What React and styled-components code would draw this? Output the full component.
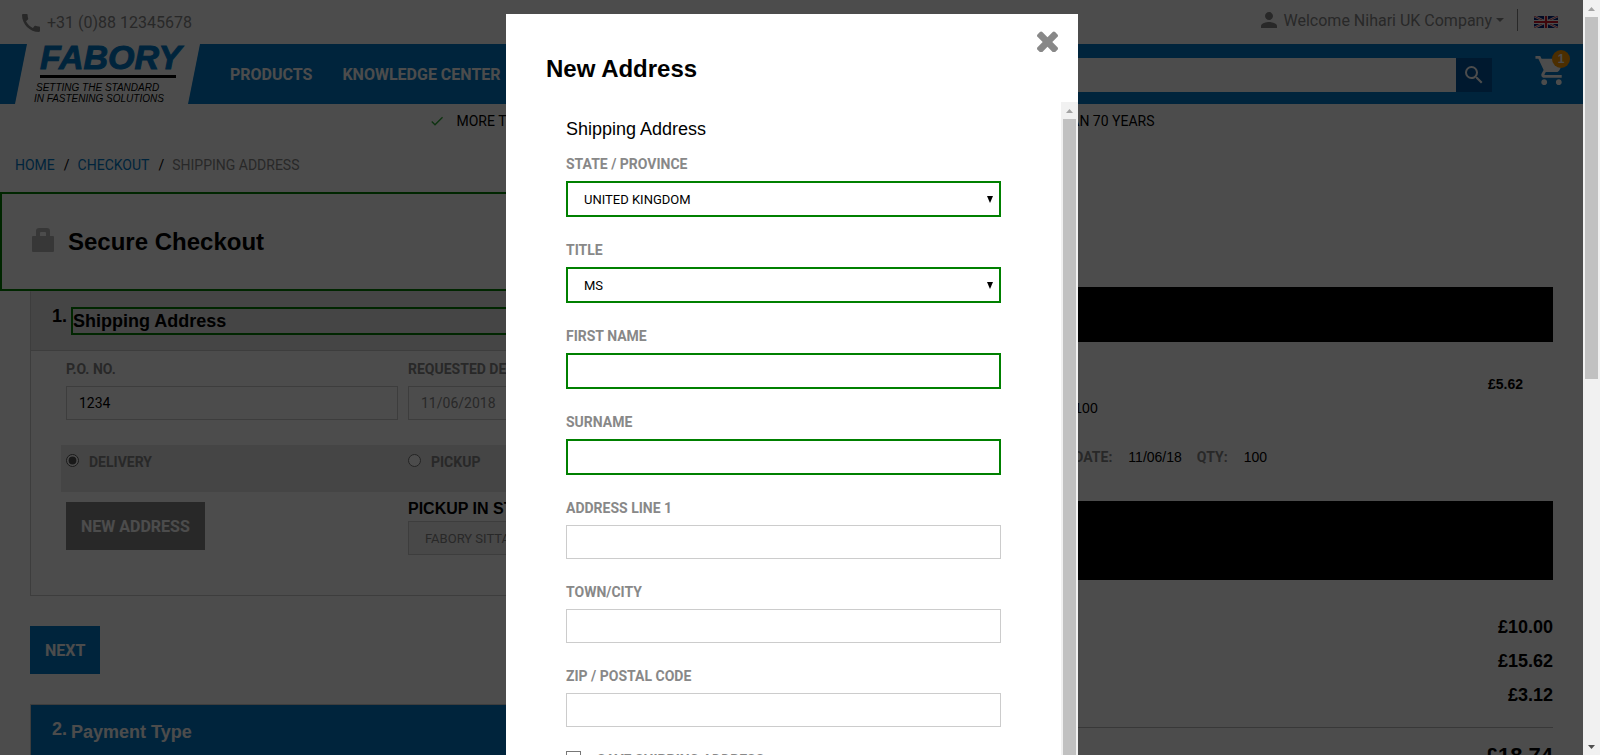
import React from "react";
import styled, { createGlobalStyle } from "styled-components";
import { MdCall, MdPerson, MdSearch, MdShoppingCart, MdCheck } from "react-icons/md";

const blue = "#007ac9";
const grey = "#888";
const line = "#ccc";
const pale = "#e6e6e6";
const arial = '"Liberation Sans", Arial, sans-serif';
const roboto = 'Roboto, "Liberation Sans", sans-serif';

const GlobalStyle = createGlobalStyle`
  *, *::before, *::after { box-sizing: border-box; }
  body { margin: 0; background: #fff; color: #000; font: 14px/20px ${roboto}; overflow: hidden; }
  h1, h2, h3, p, ul, ol, dl, dd, dt { margin: 0; padding: 0; list-style: none; }
  a { text-decoration: none; }
  button, input, select { font-family: inherit; border-radius: 0; }
  button { border: 0; padding: 0; cursor: pointer; }
`;

const Shell = styled.div`
  display: flex;
  height: 100vh;
`;

const Viewport = styled.div`
  position: relative;
  flex: 1;
  min-width: 0;
  overflow: hidden;
`;

/* Scrollbar */
const Track = styled.div`
  display: flex;
  flex-direction: column;
  align-items: center;
  flex: none;
  width: 17px;
  background: #f1f1f1;
`;
const Thumb = styled.div`
  width: 13px;
  flex: 0 0 ${(p) => p.$size};
  background: #c1c1c1;
`;
const ArrowBox = styled.svg`
  flex: none;
  width: 17px;
  height: 17px;
  fill: ${(p) => p.$tone};
`;
const Spacer = styled.div`
  flex: 1;
`;

function Scrollbar({ size, open }) {
  return (
    <Track aria-hidden="true">
      <ArrowBox $tone="#a3a3a3" viewBox="0 0 17 17"><path d="M5 11h7L8.500 7z" /></ArrowBox>
      <Thumb $size={size} />
      {open && (
        <>
          <Spacer />
          <ArrowBox $tone="#505050" viewBox="0 0 17 17"><path d="M5 7h7l-3.500 4z" /></ArrowBox>
        </>
      )}
    </Track>
  );
}

/* Site header */
const TopBar = styled.div`
  display: flex;
  justify-content: space-between;
  align-items: center;
  height: 44px;
  padding: 0 25px 4px 19px;
  color: ${grey};
  font-size: 16px;
`;
const Phone = styled.a`
  display: flex;
  align-items: center;
  gap: 4px;
  padding-top: 5px;
  color: inherit;
`;
const Account = styled.div`
  display: flex;
  align-items: center;
`;
const AccountButton = styled.button`
  display: flex;
  align-items: center;
  gap: 3px;
  background: none;
  color: inherit;
  font-size: 16px;
`;
const Caret = styled.span`
  margin-left: 1px;
  border: 4px solid transparent;
  border-top-color: currentColor;
  border-bottom: 0;
`;
const Divider = styled.span`
  width: 1px;
  height: 22px;
  margin: 0 16px 0 13px;
  background: ${grey};
`;
const Flag = styled.svg`
  display: block;
  width: 24px;
  height: 12px;
  margin-top: 4px;
`;

const Header = styled.header`
  display: flex;
  align-items: center;
  height: 60px;
  padding: 0 14px 0 15px;
  background: ${blue};
`;
const Logo = styled.svg`
  display: block;
  flex: none;
  width: 185px;
  height: 60px;
`;
const Nav = styled.nav`
  display: flex;
  flex: none;
  gap: 30px;
  margin: 2px 0 0 30px;
`;
const NavLink = styled.a`
  color: #fff;
  font-size: 16px;
  font-weight: 700;
`;
const Search = styled.form`
  display: flex;
  flex: 1;
  height: 34px;
  margin: 2px 42px 0 30px;
`;
const SearchInput = styled.input`
  flex: 1;
  min-width: 0;
  border: 0;
  padding: 0 12px;
  background: #fff;
`;
const SearchButton = styled.button`
  display: grid;
  place-items: center;
  width: 36px;
  background: #00569f;
  color: #fff;
`;
const Cart = styled.a`
  position: relative;
  display: block;
  height: 35px;
  margin-bottom: 7px;
  color: #fff;
`;
const Badge = styled.span`
  position: absolute;
  top: -3px;
  right: -1px;
  width: 18px;
  height: 18px;
  border-radius: 50%;
  background: #f90;
  color: #fff;
  font: 700 12px/18px ${arial};
  text-align: center;
`;

const Usps = styled.ul`
  display: flex;
  justify-content: space-between;
  width: 726px;
  margin: 0 auto;
  padding-top: 7px;
`;
const Usp = styled.li`
  display: flex;
  align-items: center;
  gap: 12px;
  svg { color: #2fa836; }
`;
const Crumbs = styled.ol`
  display: flex;
  padding: 24px 15px 17px;
`;
const Crumb = styled.li`
  color: ${grey};
  a { color: ${blue}; }
  & + &::before { content: "/"; margin: 0 8px 0 9px; color: #000; }
`;

/* Checkout */
const Columns = styled.main`
  display: grid;
  grid-template-columns: 2fr 1fr;
`;
const Secure = styled.div`
  display: flex;
  align-items: center;
  gap: 14px;
  height: 99px;
  padding-left: 30px;
  border: 2px solid green;
`;
const Lock = styled.svg`
  width: 22px;
  height: 24px;
  margin-bottom: 4px;
  fill: #b9b9b9;
`;
const PageTitle = styled.h1`
  font: 700 24px/28px ${arial};
`;
const Steps = styled.div`
  padding: 0 15px 0 30px;
`;
const Step = styled.section`
  border: 1px solid ${line};
  border-top-color: ${(p) => (p.$active ? pale : line)};
`;
const StepHead = styled.header`
  display: flex;
  gap: 4px;
  padding: 15px 20px 15px 21px;
  background: ${(p) => (p.$active ? pale : blue)};
  border-bottom: 1px solid ${line};
  color: ${(p) => (p.$active ? "#000" : "#fff")};
  font: 700 18px/18px ${arial};
`;
const StepTitle = styled.h2`
  flex: 1;
  border: ${(p) => (p.$active ? "2px solid green" : "0")};
  font: inherit;
  line-height: 24px;
`;
const StepBody = styled.div`
  padding: 8px 30px 40px;
`;
const FormRow = styled.div`
  display: grid;
  grid-template-columns: 332px 332px 1fr;
  gap: 10px;
  padding: 0 5px;
`;
const ChoiceRow = styled(FormRow)`
  height: 47px;
  margin: 25px 0 10px;
  background: ${pale};
`;
const Label = styled.label`
  display: block;
  color: ${grey};
  font: 700 14px/20px ${roboto};
`;
const TextInput = styled.input`
  display: block;
  width: 100%;
  height: 34px;
  margin-top: 7px;
  padding: 0 12px;
  border: 1px solid ${line};
  background: #fff;
  color: ${(p) => (p.$muted ? grey : "#000")};
  font-size: 14px;
`;
const Choice = styled.label`
  display: flex;
  align-items: flex-start;
  gap: 10px;
  padding-top: 7px;
  color: ${grey};
  font-weight: 700;
  input { width: 13px; height: 13px; margin: 2px 0 0; accent-color: #555; }
`;
const Button = styled.button`
  justify-self: start;
  height: 48px;
  padding: 2px 15px 0;
  background: ${(p) => (p.$muted ? grey : blue)};
  color: #fff;
  font: 700 16px/20px ${roboto};
`;
const PickupTitle = styled.h3`
  font: 700 16px/14px ${arial};
`;
const StoreSelect = styled.select`
  display: block;
  width: 100%;
  height: 34px;
  margin-top: 5px;
  padding: 0 16px;
  border: 1px solid ${line};
  background: #f0f0f0;
  color: ${grey};
  font-size: 13px;
  appearance: none;
`;
const StepAction = styled.div`
  display: flex;
  padding: 30px 0;
`;

/* Order summary */
const Summary = styled.aside`
  padding: 95px 30px 0 0;
  font-family: ${arial};
`;
const Band = styled.div`
  height: ${(p) => p.$height};
  background: #000;
`;
const Item = styled.div`
  display: flex;
  flex-direction: column;
  gap: 4px;
  padding: 32px 30px 34px 19px;
`;
const ItemPrice = styled.strong`
  align-self: flex-end;
`;
const ItemMeta = styled.dl`
  display: flex;
  margin-top: 25px;
  dt { color: ${grey}; font-weight: 700; font-family: ${roboto}; margin-right: 16px; }
  dd { margin-right: 15px; }
`;
const Totals = styled.div`
  display: flex;
  flex-direction: column;
  align-items: flex-end;
  gap: 14px;
  padding: 37px 0 22px;
  border-bottom: 1px solid #bbb;
  font: 700 18px/20px ${arial};
`;
const GrandTotal = styled.p`
  padding-top: 15px;
  font: 700 22px/26px ${arial};
  text-align: right;
`;

/* Dialog */
const Overlay = styled.div`
  position: absolute;
  inset: 0;
  display: flex;
  justify-content: center;
  padding: 14px 0 0 1px;
  background: rgba(0, 0, 0, 0.7);
`;
const Dialog = styled.section`
  display: flex;
  flex-direction: column;
  width: 572px;
  background: #fff;
`;
const DialogHead = styled.header`
  display: flex;
  justify-content: space-between;
  align-items: flex-start;
  height: 88px;
  padding: 17px 20px 0 40px;
`;
const DialogTitle = styled.h2`
  padding-top: 24px;
  font: 700 24px/28px ${arial};
`;
const Close = styled.button`
  background: none;
  svg { display: block; width: 21px; height: 21px; fill: ${grey}; }
`;
const DialogBody = styled.div`
  display: flex;
  flex: 1;
  min-height: 0;
`;
const AddressForm = styled.form`
  flex: 1;
  padding: 16px 60px 0;
  overflow: hidden;
`;
const FormTitle = styled.h3`
  margin-bottom: 14px;
  font: 400 18px/22px ${arial};
`;
const Field = styled.div`
  margin-bottom: 23px;
`;
const FieldInput = styled(TextInput)`
  height: ${(p) => (p.$required ? "36px" : "34px")};
  border: ${(p) => (p.$required ? "2px solid green" : `1px solid ${line}`)};
`;
const SelectWrap = styled.div`
  display: grid;
  align-items: center;
  margin-top: 7px;
  > * { grid-area: 1 / 1; }
`;
const FieldSelect = styled.select`
  width: 100%;
  height: 36px;
  padding: 0 16px;
  border: 2px solid green;
  background: #fff;
  color: #000;
  font-size: 13px;
  appearance: none;
`;
const SelectArrow = styled.svg`
  justify-self: end;
  width: 6px;
  height: 7px;
  margin-right: 8px;
  pointer-events: none;
`;
const Tick = styled.label`
  display: flex;
  gap: 16px;
  color: ${grey};
  font-weight: 700;
  input {
    width: 15px;
    height: 15px;
    margin: 1px 0 0;
    border: 1px solid #777;
    background: #fff;
    appearance: none;
  }
`;

const fields = [
  { id: "country", label: "STATE / PROVINCE", option: "UNITED KINGDOM" },
  { id: "title", label: "TITLE", option: "MS" },
  { id: "first", label: "FIRST NAME", required: true },
  { id: "surname", label: "SURNAME", required: true },
  { id: "address1", label: "ADDRESS LINE 1" },
  { id: "town", label: "TOWN/CITY" },
  { id: "zip", label: "ZIP / POSTAL CODE" },
];

function AddressField({ id, label, option, required }) {
  return (
    <Field>
      <Label htmlFor={id}>{label}</Label>
      {option ? (
        <SelectWrap>
          <FieldSelect id={id}><option>{option}</option></FieldSelect>
          <SelectArrow viewBox="0 0 6 7"><path d="M0 0h6L3 7z" /></SelectArrow>
        </SelectWrap>
      ) : (
        <FieldInput id={id} type="text" $required={required} />
      )}
    </Field>
  );
}

function SiteHeader() {
  return (
    <>
      <TopBar>
        <Phone href="tel:+318812345678"><MdCall size={24} />+31 (0)88 12345678</Phone>
        <Account>
          <AccountButton type="button">
            <MdPerson size={24} />Welcome Nihari UK Company<Caret />
          </AccountButton>
          <Divider />
          <Flag viewBox="0 0 24 12">
            <path fill="#00247d" d="M0 0h24v12H0z" />
            <path stroke="#fff" strokeWidth="2.400" d="M0 0l24 12M24 0L0 12" />
            <path stroke="#cf142b" strokeWidth="0.800" d="M0 0l24 12M24 0L0 12" />
            <path stroke="#fff" strokeWidth="4" d="M12 0v12M0 6h24" />
            <path stroke="#cf142b" strokeWidth="2.200" d="M12 0v12M0 6h24" />
          </Flag>
        </Account>
      </TopBar>
      <Header>
        <Logo viewBox="0 0 185 60" role="img" aria-label="Fabory">
          <path fill="#fff" d="M12 0h173l-12 60H0z" />
          <text x="25" y="25" fill={blue} stroke={blue} fontFamily="Liberation Sans" fontSize="34" fontWeight="700" fontStyle="italic">FABORY</text>
          <path d="M25 31h136v3H25z" />
          <text x="21" y="47" fontFamily="Liberation Sans" fontSize="10" fontStyle="italic">SETTING THE STANDARD</text>
          <text x="19" y="58" fontFamily="Liberation Sans" fontSize="10" fontStyle="italic">IN FASTENING SOLUTIONS</text>
        </Logo>
        <Nav>
          <NavLink href="#products">PRODUCTS</NavLink>
          <NavLink href="#knowledge">KNOWLEDGE CENTER</NavLink>
        </Nav>
        <Search>
          <SearchInput type="search" aria-label="Search" />
          <SearchButton type="button" aria-label="Search"><MdSearch size={24} /></SearchButton>
        </Search>
        <Cart href="#cart" aria-label="Cart"><MdShoppingCart size={35} /><Badge>1</Badge></Cart>
      </Header>
      <Usps>
        <Usp><MdCheck size={16} />MORE THAN</Usp>
        <Usp>MORE THAN 70 YEARS</Usp>
      </Usps>
      <Crumbs>
        <Crumb><a href="#home">HOME</a></Crumb>
        <Crumb><a href="#checkout">CHECKOUT</a></Crumb>
        <Crumb>SHIPPING ADDRESS</Crumb>
      </Crumbs>
    </>
  );
}

function CheckoutSteps() {
  return (
    <div>
      <Secure>
        <Lock viewBox="0 0 22 24">
          <path fillRule="evenodd" d="M1 8h3V3q0-3 3-3h8q3 0 3 3v5h3q1 0 1 1v14q0 1-1 1H1q-1 0-1-1V9q0-1 1-1zM8 8h6V5q0-1-1-1H9Q8 4 8 5z" />
        </Lock>
        <PageTitle>Secure Checkout</PageTitle>
      </Secure>
      <Steps>
        <Step $active>
          <StepHead $active><span>1.</span><StepTitle $active>Shipping Address</StepTitle></StepHead>
          <StepBody>
            <FormRow>
              <div>
                <Label htmlFor="po">P.O. NO.</Label>
                <TextInput id="po" defaultValue="1234" />
              </div>
              <div>
                <Label htmlFor="date">REQUESTED DELIVERY</Label>
                <TextInput id="date" $muted defaultValue="11/06/2018" />
              </div>
            </FormRow>
            <ChoiceRow>
              <Choice><input type="radio" name="method" defaultChecked />DELIVERY</Choice>
              <Choice><input type="radio" name="method" />PICKUP</Choice>
            </ChoiceRow>
            <FormRow>
              <Button type="button" $muted>NEW ADDRESS</Button>
              <div>
                <PickupTitle>PICKUP IN STORE</PickupTitle>
                <StoreSelect aria-label="Pickup in store"><option>FABORY SITTARD</option></StoreSelect>
              </div>
            </FormRow>
          </StepBody>
        </Step>
        <StepAction><Button type="button">NEXT</Button></StepAction>
        <Step>
          <StepHead><span>2.</span><StepTitle>Payment Type</StepTitle></StepHead>
        </Step>
      </Steps>
    </div>
  );
}

function OrderSummary() {
  return (
    <Summary>
      <Band $height="55px" />
      <Item>
        <ItemPrice>£5.62</ItemPrice>
        <p>100</p>
        <ItemMeta>
          <dt>DATE:</dt><dd>11/06/18</dd>
          <dt>QTY:</dt><dd>100</dd>
        </ItemMeta>
      </Item>
      <Band $height="79px" />
      <Totals><span>£10.00</span><span>£15.62</span><span>£3.12</span></Totals>
      <GrandTotal>£18.74</GrandTotal>
    </Summary>
  );
}

function AddressDialog() {
  return (
    <Overlay>
      <Dialog role="dialog" aria-labelledby="dialog-title">
        <DialogHead>
          <DialogTitle id="dialog-title">New Address</DialogTitle>
          <Close type="button" aria-label="Close">
            <svg viewBox="302 334 1188 1188">
              <path d="M1490 1322q0 40-28 68l-136 136q-28 28-68 28t-68-28l-294-294-294 294q-28 28-68 28t-68-28l-136-136q-28-28-28-68t28-68l294-294-294-294q-28-28-28-68t28-68l136-136q28-28 68-28t68 28l294 294 294-294q28-28 68-28t68 28l136 136q28 28 28 68t-28 68l-294 294 294 294q28 28 28 68z" />
            </svg>
          </Close>
        </DialogHead>
        <DialogBody>
          <AddressForm>
            <FormTitle>Shipping Address</FormTitle>
            {fields.map((f) => <AddressField key={f.id} {...f} />)}
            <Tick><input type="checkbox" />SAVE SHIPPING ADDRESS</Tick>
          </AddressForm>
          <Scrollbar size="calc(100% - 17px)" />
        </DialogBody>
      </Dialog>
    </Overlay>
  );
}

export default function App() {
  return (
    <>
      <GlobalStyle />
      <Shell>
        <Viewport>
          <SiteHeader />
          <Columns>
            <CheckoutSteps />
            <OrderSummary />
          </Columns>
          <AddressDialog />
        </Viewport>
        <Scrollbar size="48%" open />
      </Shell>
    </>
  );
}
